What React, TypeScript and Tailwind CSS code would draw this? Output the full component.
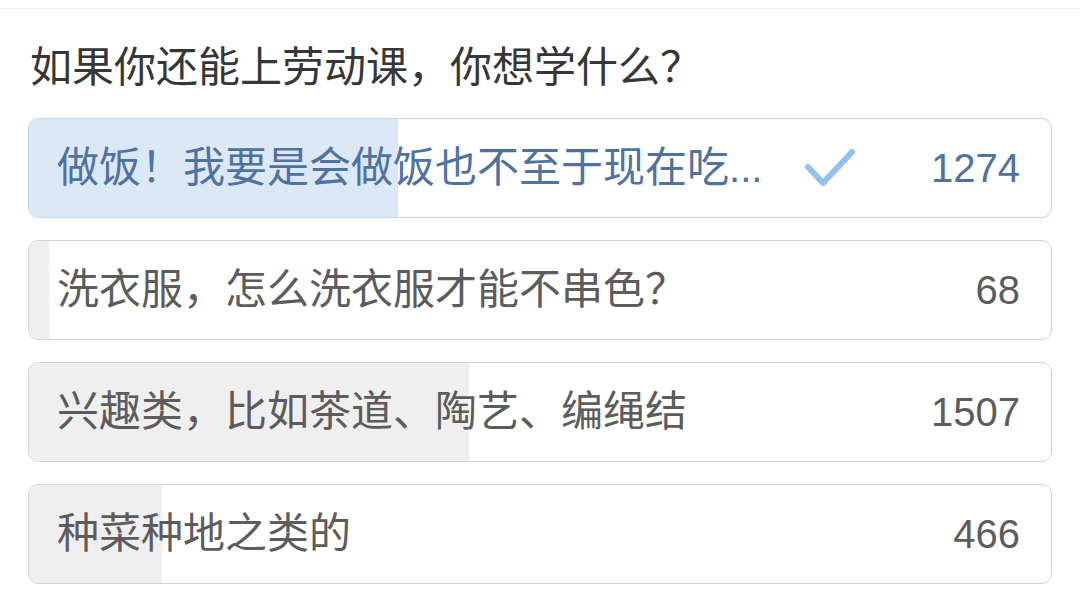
import React from "react";

const options = [
  { label: "做饭！我要是会做饭也不至于现在吃", more: true, count: 1274, fill: 369, selected: true },
  { label: "洗衣服，怎么洗衣服才能不串色？", more: false, count: 68, fill: 20, selected: false },
  { label: "兴趣类，比如茶道、陶艺、编绳结", more: false, count: 1507, fill: 440, selected: false },
  { label: "种菜种地之类的", more: false, count: 466, fill: 133, selected: false },
];

function CheckMark() {
  return (
    <svg width="52" height="42" viewBox="0 0 52 42" className="shrink-0" aria-hidden>
      <path
        d="M4 20 L19 36 L48 5"
        fill="none"
        stroke="#93c2f2"
        strokeWidth="6"
        strokeLinecap="round"
        strokeLinejoin="round"
      />
    </svg>
  );
}

export default function App() {
  return (
    <div
      className="w-[1080px] h-[593px] overflow-hidden bg-white"
      style={{ fontFamily: '"Liberation Sans", "Noto Sans CJK SC", sans-serif' }}
    >
      <div className="h-2" />
      <div className="h-px bg-[#f0f0f0]" />
      <h1 className="mt-[39px] pl-[30px] text-[42px] leading-[40px] font-normal text-[#363636]">
        如果你还能上劳动课，你想学什么？
      </h1>
      <div className="mt-[30px] flex flex-col gap-[22px] px-[28px]">
        {options.map((o) => (
          <div
            key={o.label}
            className={
              o.selected
                ? "relative h-[100px] overflow-hidden rounded-[10px] border border-[#bcd4ec] bg-white"
                : "relative h-[100px] overflow-hidden rounded-[10px] border border-[#d2d2d2] bg-white"
            }
          >
            <div
              className={o.selected ? "absolute inset-y-0 left-0 bg-[#dce8f5]" : "absolute inset-y-0 left-0 bg-[#efefef]"}
              style={{ width: o.fill }}
            />
            <div className="relative flex h-full items-center pl-[28px] pr-[31px] leading-none">
              <span
                className={
                  o.selected
                    ? "whitespace-nowrap text-[42px] text-[#4f72a0]"
                    : "whitespace-nowrap text-[42px] text-[#5c5c5c]"
                }
              >
                {o.label}
                {o.more && <span className="text-[40px]">...</span>}
              </span>
              {o.selected && (
                <span className="ml-[42px] flex">
                  <CheckMark />
                </span>
              )}
              <span
                className={
                  o.selected ? "ml-auto text-[40px] text-[#4f72a0]" : "ml-auto text-[40px] text-[#5c5c5c]"
                }
              >
                {o.count}
              </span>
            </div>
          </div>
        ))}
      </div>
    </div>
  );
}
